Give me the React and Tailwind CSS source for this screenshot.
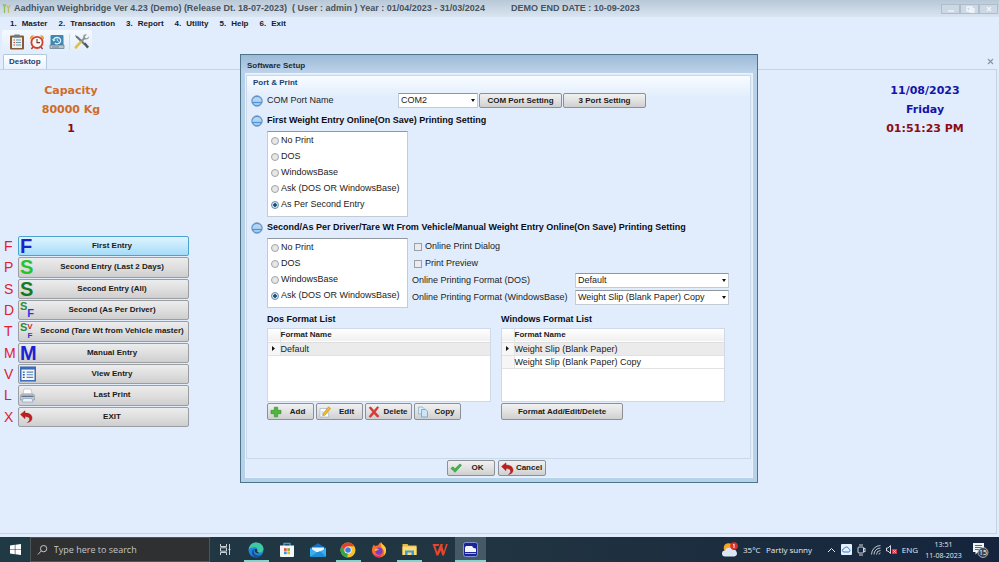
import React from "react";

const ui = "font-['Liberation_Sans',Arial,sans-serif]";
const btn =
  "rounded-[2px] border border-[#8d9197] bg-linear-to-b from-[#f1f1f1] via-[#e2e2e2] to-[#cfcfcf] text-[8px] font-bold leading-none text-[#1a1a1a] whitespace-nowrap";

/* ---------- toolbar icons ---------- */
const Clipboard = () => (
  <svg width="16" height="16" viewBox="0 0 16 16">
    <rect x="1" y="1.5" width="14" height="14" rx="1" fill="#8a5a35" />
    <rect x="3" y="3.5" width="10" height="10.5" fill="#e9f3f4" />
    <rect x="5" y="0.5" width="6" height="3" rx="1" fill="#6d7c82" />
    <path d="M4.5 6h1.5M4.5 8.5h1.5M4.5 11h1.5" stroke="#c4523c" strokeWidth="1.2" />
    <path d="M7 6h5M7 8.5h5M7 11h5" stroke="#6f93a0" strokeWidth="1.1" />
  </svg>
);
const Alarm = () => (
  <svg width="16" height="16" viewBox="0 0 16 16">
    <path d="M1 5a3 3 0 0 1 4-3.6L2 5.6zM15 5a3 3 0 0 0-4-3.6L14 5.6z" fill="#e9a03b" />
    <path d="M4 13l-1.6 2M12 13l1.6 2" stroke="#8b4a3c" strokeWidth="1.4" />
    <circle cx="8" cy="8.4" r="5.6" fill="#fbf6f2" stroke="#d2402f" strokeWidth="1.8" />
    <path d="M8 5v3.6h3" stroke="#55413d" strokeWidth="1.1" fill="none" />
  </svg>
);
const Backup = () => (
  <svg width="16" height="16" viewBox="0 0 16 16">
    <rect x="1.5" y="1" width="13" height="11" rx="1" fill="#3f88b4" />
    <path d="M1 11h14v3.5H1z" fill="#b9c7d1" stroke="#5d7485" strokeWidth=".7" />
    <path d="M3 13h7" stroke="#5d7485" strokeWidth=".8" />
    <path d="M4.5 6.2a3.6 3.2 0 1 1 1.2 2.8" stroke="#e6f4fb" strokeWidth="1.2" fill="none" />
    <path d="M3 5l1.500 2.400L6.600 6z" fill="#e6f4fb" />
    <path d="M8.200 4.600v2l1.600.8" stroke="#e6f4fb" strokeWidth=".9" fill="none" />
  </svg>
);
const Tools = () => (
  <svg width="17" height="16" viewBox="0 0 17 16">
    <path d="M2 1l1 2.500L11 11l1.500-1.400L5 2.600z" fill="#6b7376" />
    <path d="M10.600 10.200l1.800-1.600 3.600 4.200-1.800 1.800z" fill="#50585c" />
    <path d="M15.800 2.400l-2 2-1.600-.6-.4-1.400 2-2c-2.400-.6-4.200 1.400-3.600 3.600L7 7l1.600 1.600 3-3.200c2.600.6 4.800-.8 4.200-3z" fill="#8c9599" />
    <path d="M7.200 6.800L9 8.600 3.600 14.400c-1.400 1-2.800-.4-1.800-1.800z" fill="#e3c13a" />
  </svg>
);

/* ---------- action icons ---------- */
const Undo = () => (
  <svg width="13" height="13" viewBox="0 0 13 13" className="shrink-0">
    <path d="M.5 4.500L5 .8v2.300c4.600 0 7.300 2 7 5.400-.2 2.200-2 3.600-4.600 4 1.600-1 2.200-2 2.200-3.300 0-1.700-1.600-2.600-4.600-2.600v2.200z" fill="#c01f1f" stroke="#8b1212" strokeWidth=".4" />
  </svg>
);
const Check = () => (
  <svg width="12" height="12" viewBox="0 0 12 12" className="shrink-0">
    <path d="M.8 6.500L3 4.800l2 2L9.800 2l1.700 1.200L5.200 10.300z" fill="#3fb54a" stroke="#258a32" strokeWidth=".5" />
  </svg>
);
const Plus = () => (
  <svg width="12" height="12" viewBox="0 0 12 12" className="shrink-0">
    <path d="M4.300 1.200h3.400v3.100h3.300v3.400H7.700v3.100H4.300V7.700H1V4.300h3.300z" fill="#4cb83c" stroke="#2f8a2a" strokeWidth=".6" />
  </svg>
);
const Edit = () => (
  <svg width="12" height="12" viewBox="0 0 12 12" className="shrink-0">
    <path d="M1 2.500h7l2 8.500H1z" fill="#fff" stroke="#9fb0c4" strokeWidth=".7" />
    <path d="M2.500 8h4M2.500 6h2" stroke="#8aa6c8" strokeWidth=".7" />
    <path d="M9.600.8l1.900 1.700L6.200 9l-2.500.9.6-2.600z" fill="#f0bd2e" stroke="#a97f1a" strokeWidth=".5" />
  </svg>
);
const Cross = () => (
  <svg width="12" height="12" viewBox="0 0 12 12" className="shrink-0">
    <path d="M1 1.800L2.800.8 6 4.400 9.400.6l1.400.8L7.400 5.900l3.800 4.300-1.800 1.100L6 7.700 2.600 11.400 1 10.400l3.600-4.500z" fill="#e23a33" stroke="#b42220" strokeWidth=".4" />
  </svg>
);
const Copy = () => (
  <svg width="12" height="12" viewBox="0 0 12 12" className="shrink-0">
    <path d="M1.500 1h4l1.500 1.500V8H1.500z" fill="#dcedf9" stroke="#7fabc9" strokeWidth=".7" />
    <path d="M4.500 3.500h4.200l1.800 1.800V11h-6z" fill="#cde5f6" stroke="#5f96bd" strokeWidth=".7" />
  </svg>
);
const Sphere = () => (
  <svg width="12" height="12" viewBox="0 0 12 12" className="shrink-0">
    <circle cx="6" cy="6" r="5.300" fill="#4f93d6" stroke="#7593b5" strokeWidth=".8" />
    <path d="M1.600 5.200a4.500 4.200 0 0 1 8.800 0z" fill="#b4d5f5" />
    <path d="M1.500 5.400h9v1.200h-9z" fill="#e4f2fd" />
    <path d="M2.200 8a4 3.400 0 0 0 7.600 0z" fill="#9ccdf5" />
  </svg>
);
const ListIcon = () => (
  <svg width="17" height="16" viewBox="0 0 17 16">
    <rect x=".8" y=".8" width="15.400" height="14.400" fill="#f4f8fd" stroke="#3a6cb8" strokeWidth="1.600" />
    <path d="M1 2.300h15" stroke="#3a6cb8" strokeWidth="2" />
    <path d="M3 6h2M3 8.800h2M3 11.600h2" stroke="#2c5596" strokeWidth="1.500" />
    <path d="M7 6h7M7 8.800h7M7 11.600h7" stroke="#5f82ba" strokeWidth="1.200" />
  </svg>
);
const Printer = () => (
  <svg width="15" height="15" viewBox="0 0 15 15">
    <path d="M4 1h7l1 5H3z" fill="#fff" stroke="#b4bcc6" strokeWidth=".7" />
    <path d="M1.500 6h12l1 2v4h-14V8z" fill="#c4cbd4" stroke="#8e98a5" strokeWidth=".7" />
    <path d="M1.500 8.300h12" stroke="#5c6674" strokeWidth="1.200" />
    <path d="M3 10.500h9l.8 3.500H2.200z" fill="#e8f1fb" stroke="#8aa5c5" strokeWidth=".7" />
  </svg>
);

const g = "font-bold leading-[18px]";
const sideItems = [
  ["F", "First Entry", <span className={`${g} text-[20px] text-[#1c22cf]`}>F</span>],
  ["P", "Second Entry (Last 2 Days)", <span className={`${g} text-[20px] text-[#27c32f]`}>S</span>],
  ["S", "Second Entry (All)", <span className={`${g} text-[20px] text-[#157a25]`}>S</span>],
  ["D", "Second (As Per Driver)", (
    <span className="flex text-[11px] leading-[11px] font-bold">
      <span className="text-[#2a8b3c]">S</span>
      <span className="pt-[7px] text-[#2b35d8]">F</span>
    </span>
  )],
  ["T", "Second (Tare Wt from Vehicle master)", (
    <span className="flex text-[11px] leading-[11px] font-bold">
      <span className="text-[#2a8b3c]">S</span>
      <span className="flex flex-col text-[8px] leading-[9px]">
        <span className="text-[#d22a2a]">V</span>
        <span className="text-[#2b35d8]">F</span>
      </span>
    </span>
  )],
  ["M", "Manual Entry", <span className={`${g} text-[20px] text-[#1c22cf]`}>M</span>],
  ["V", "View Entry", <ListIcon />],
  ["L", "Last Print", <Printer />],
  ["X", "EXIT", <Undo />],
];

function SideMenu() {
  return (
    <nav className="mt-[98px] flex h-[191px] flex-col gap-px">
      {sideItems.map(([key, label, icon], i) => (
        <div key={key} className="flex min-h-0 flex-1 items-center">
          <span className="w-[18px] pl-[4px] text-[14px] leading-none text-[#e0202e]">{key}</span>
          <button
            type="button"
            className={
              "flex h-full w-[171px] items-center rounded-[2px] border text-[8px] font-bold whitespace-nowrap text-[#1a1a1a] " +
              (i === 0
                ? "border-[#4ba3cf] bg-linear-to-b from-[#def3fd] via-[#c3e9fc] to-[#a5dbf8]"
                : "border-[#9a9ea3] bg-linear-to-b from-[#ececec] via-[#dfdfdf] to-[#cecece]")
            }
          >
            <span className="flex w-[17px] shrink-0 justify-start pl-px">{icon}</span>
            <span className="flex-1 text-center">{label}</span>
          </button>
        </div>
      ))}
    </nav>
  );
}

function Radios({ name, options, value }) {
  return (
    <div role="radiogroup" aria-label={name} className="ml-[20px] w-[141px] shrink-0 border border-[#c3ccd6] border-t-[#8f979f] bg-white px-[3px] pt-px pb-[3px]">
      {options.map((o) => (
        <label key={o} className="flex h-4 items-center gap-[2px] text-[9px] whitespace-nowrap text-[#222]">
          <input
            type="radio"
            name={name}
            defaultChecked={o === value}
            className="size-[8px] shrink-0 appearance-none rounded-full border border-[#a0a4a8] bg-[#e6e6e6] checked:border-[#6c8ca8] checked:bg-[radial-gradient(circle,#1c4f78_35%,#cfe3f2_50%)]"
          />
          {o}
        </label>
      ))}
    </div>
  );
}

function Select({ id, options, className }) {
  return (
    <span className={"relative flex h-[15px] " + className}>
      <select id={id} className="w-full appearance-none border border-[#c3ccd6] border-t-[#8f979f] bg-white pl-[2px] text-[9px] leading-none text-[#222]">
        {options.map((o) => <option key={o}>{o}</option>)}
      </select>
      <svg className="pointer-events-none absolute top-[6px] right-[3px]" width="4" height="3" viewBox="0 0 4 3"><path d="M0 0h4L2 3z" fill="#111" /></svg>
    </span>
  );
}

function FormatTable({ title, rows }) {
  return (
    <div className="w-[224px]">
      <h3 className="h-[14px] text-[9px] leading-[14px] font-bold text-[#0c0c14]">{title}</h3>
      <div className="mt-[2px] h-[74px] border border-[#cfdae6] bg-white">
        <table aria-label={title} className="w-full border-collapse text-left text-[9px] leading-[12px] text-[#222]">
          <thead>
            <tr className="h-[13px] border-b border-[#dedede] bg-linear-to-b from-white to-[#f0f0f0] text-[8px]">
              <th className="w-[12px] border-r border-[#e4e4e4]" />
              <th className="font-bold">Format Name</th>
            </tr>
          </thead>
          <tbody>
            {rows.map((r, i) => (
              <tr key={r} className={"h-[13px] border-b border-[#e2e2e2] " + (i === 0 ? "bg-[#ebebeb]" : "")}>
                <td className="border-r border-[#e4e4e4] bg-[#f6f6f6]">
                  {i === 0 && <svg className="mx-auto" width="3" height="5" viewBox="0 0 3 5"><path d="M0 0l3 2.500L0 5z" fill="#111" /></svg>}
                </td>
                <td>{r}</td>
              </tr>
            ))}
          </tbody>
        </table>
      </div>
    </div>
  );
}

function IconButton({ icon, children, className = "" }) {
  return (
    <button type="button" className={`${btn} flex items-center pl-[2px] ${className}`}>
      {icon}
      <span className="flex-1 text-center">{children}</span>
    </button>
  );
}

function SectionTitle({ children, className }) {
  return (
    <h2 className={"flex h-[14px] items-center gap-[4px] text-[9px] font-bold whitespace-nowrap text-[#0c0c14] " + className}>
      <Sphere />
      {children}
    </h2>
  );
}

function Dialog() {
  return (
    <section role="dialog" aria-label="Software Setup" className="pointer-events-auto w-[518px] border border-[#4d7488] bg-[#b7d2e8] px-[4px] pb-[4px]">
      <header className="-mx-[4px] flex h-[18px] items-center bg-linear-to-b from-[#9dbad8] to-[#bdd3ea] pt-[4px] pl-[6px] text-[8px] font-bold text-[#1d2b3a]">
        Software Setup
      </header>
      <div className="border border-[#e8f2fc] bg-[#e1edfc]">
        <div className="mt-px mr-px border border-[#c9d9ea] bg-linear-to-b from-[#f8fcff] to-[#e1edfc] to-[22px] pb-[38px]">
          <div className="h-[15px] pl-[6px] text-[8px] leading-[13px] font-bold text-[#1f3f70]">Port &amp; Print</div>
          <div className="px-[4px] pt-[2px]">
            <div className="flex h-[15px] items-center">
              <Sphere />
              <label htmlFor="com" className="w-[135px] pl-[4px] text-[9px] text-[#222]">COM Port Name</label>
              <Select id="com" options={["COM2"]} className="w-[80px]" />
              <button type="button" className={`${btn} ml-px h-[15px] w-[83px]`}>COM Port Setting</button>
              <button type="button" className={`${btn} ml-px h-[15px] w-[83px]`}>3 Port Setting</button>
            </div>
            <SectionTitle className="mt-[6px]">First Weight Entry Online(On Save) Printing Setting</SectionTitle>
            <div className="mt-[3px] -ml-[4px] flex">
              <Radios name="First weight printing" value="As Per Second Entry" options={["No Print", "DOS", "WindowsBase", "Ask (DOS OR WindowsBase)", "As Per Second Entry"]} />
            </div>
            <SectionTitle className="mt-[4px]">Second/As Per Driver/Tare Wt From Vehicle/Manual Weight Entry Online(On Save) Printing Setting</SectionTitle>
            <div className="mt-[3px] -ml-[4px] flex gap-[4px]">
              <Radios name="Second weight printing" value="Ask (DOS OR WindowsBase)" options={["No Print", "DOS", "WindowsBase", "Ask (DOS OR WindowsBase)"]} />
              <div className="flex flex-col text-[9px] whitespace-nowrap text-[#222]">
                {["Online Print Dialog", "Print Preview"].map((t) => (
                  <label key={t} className="flex h-[17px] items-center gap-[3px] pl-[2px]">
                    <input type="checkbox" className="size-[8px] appearance-none border border-[#9aa0a6] bg-[#e9ebee]" />
                    {t}
                  </label>
                ))}
                <div className="flex h-[17px] items-center">
                  <label htmlFor="dosf" className="w-[163px]">Online Printing Format (DOS)</label>
                  <Select id="dosf" options={["Default"]} className="w-[154px]" />
                </div>
                <div className="flex h-[17px] items-center">
                  <label htmlFor="winf" className="w-[163px]">Online Printing Format (WindowsBase)</label>
                  <Select id="winf" options={["Weight Slip (Blank Paper) Copy"]} className="w-[154px]" />
                </div>
              </div>
            </div>
            <div className="mt-[4px] flex gap-[10px] pl-[16px]">
              <div>
                <FormatTable title="Dos Format List" rows={["Default"]} />
                <div className="mt-px flex gap-[2px]">
                  <IconButton icon={<Plus />} className="h-[17px] w-[47px]">Add</IconButton>
                  <IconButton icon={<Edit />} className="h-[17px] w-[47px]">Edit</IconButton>
                  <IconButton icon={<Cross />} className="h-[17px] w-[47px]">Delete</IconButton>
                  <IconButton icon={<Copy />} className="h-[17px] w-[47px]">Copy</IconButton>
                </div>
              </div>
              <div>
                <FormatTable title="Windows Format List" rows={["Weight Slip (Blank Paper)", "Weight Slip (Blank Paper) Copy"]} />
                <button type="button" className={`${btn} mt-px block h-[17px] w-[122px]`}>Format Add/Edit/Delete</button>
              </div>
            </div>
          </div>
        </div>
        <footer className="flex justify-center gap-[3px] pt-px pr-[6px] pb-px">
          <IconButton icon={<Check />} className="h-[16px] w-[48px]">OK</IconButton>
          <IconButton icon={<Undo />} className="h-[16px] w-[48px]">Cancel</IconButton>
        </footer>
      </div>
    </section>
  );
}

/* ---------- taskbar ---------- */
const Edge = () => (
  <svg width="16" height="16" viewBox="0 0 16 16">
    <circle cx="8" cy="8" r="7.500" fill="#1f86d8" />
    <path d="M.6 8C1 3.500 4 .5 8 .5c4.500 0 7.500 3 7.500 6.300 0 2.400-1.700 3.900-3.900 3.900-1.600 0-2.500-.6-2.300-1.400.8-1.300.3-4-2.600-4C3.500 5.300 1.300 6.300.6 8z" fill="#3fc9a0" />
    <path d="M6.200 7c-1.400 2.500 0 6.500 4.500 6.500 1.500 0 2.700-.5 3.600-1.200C13 14.400 11 15.500 8.500 15.500 5 15.500 3.300 12 4 9.500 4.300 8.300 5.200 7.300 6.200 7z" fill="#12539f" />
    <path d="M6.800 7.300c1.600-.7 2.900.5 2.400 2-.4.900.6 1.500 2.400 1.400-2.500 1.500-5.600-.4-4.800-3.400z" fill="#1f3540" />
  </svg>
);
const Store = () => (
  <svg width="16" height="16" viewBox="0 0 16 16">
    <path d="M5 4V1.500h6V4" fill="none" stroke="#3fa0e0" strokeWidth="1.300" />
    <path d="M1 3.500h14v10.500a1 1 0 0 1-1 1H2a1 1 0 0 1-1-1z" fill="#f4f6f8" />
    <path d="M5 6.200h2.700v2.700H5z" fill="#e8502f" /><path d="M8.300 6.200H11v2.700H8.300z" fill="#7cb52c" />
    <path d="M5 9.500h2.700v2.700H5z" fill="#2f9be8" /><path d="M8.300 9.500H11v2.700H8.300z" fill="#f3b51d" />
  </svg>
);
const MailIcon = () => (
  <svg width="16" height="14" viewBox="0 0 16 14">
    <path d="M0 5l8-4.800L16 5v8.500H0z" fill="#1372c4" />
    <path d="M2 4.500h12V9H2z" fill="#e9f4fc" />
    <path d="M0 5l8 5 8-5v8.500H0z" fill="#35b1f0" />
    <path d="M0 13.500L10 8l6 5.500z" fill="#1f8fdd" />
  </svg>
);
const Chrome = () => (
  <svg width="16" height="16" viewBox="0 0 16 16">
    <circle cx="8" cy="8" r="7.500" fill="#f5c42c" />
    <path d="M1.500 4.200A7.500 7.500 0 0 1 14.500 4.300H8L5 9.500z" fill="#e0412f" />
    <path d="M1.500 4.200L5 10l3 1.500-1 4A7.500 7.500 0 0 1 1.500 4.200z" fill="#34a34f" />
    <circle cx="8" cy="8" r="3.600" fill="#fff" /><circle cx="8" cy="8" r="2.800" fill="#3b7de8" />
  </svg>
);
const Firefox = () => (
  <svg width="16" height="16" viewBox="0 0 16 16">
    <path d="M1 8.500C.8 6 2 3.500 3 2.500l1 1.800C5 3.600 6 3.500 7 3.700 7.500 2 9 .6 10.200.3c0 2 3.500 2.700 4.600 6.200C16 11 13 15.500 8 15.500c-4 0-6.800-3-7-7z" fill="#fb6f2d" />
    <path d="M10.200.3c0 2 3.500 2.700 4.600 6.200.7 3-.3 5.500-2 7 1-3 .3-5-1-6.500C10 5 9.200 3 10.200.3z" fill="#fdc938" />
    <circle cx="8" cy="9.200" r="3.600" fill="#7c3bc9" />
    <path d="M3.600 7.500c1.400-1.500 3.500-1 4.600 0-1.600 0-1.800 1-3 1.500-1.400.4-1.600-.6-1.600-1.500z" fill="#fdae35" />
    <path d="M1.200 10c1.300 3 6 5 10 2.600-1 2-3 2.900-4.700 2.700C4 15 1.800 12.800 1.200 10z" fill="#e52b62" />
  </svg>
);
const Explorer = () => (
  <svg width="15" height="13" viewBox="0 0 15 13">
    <path d="M.5 1h5l1 1.500h8V12H.5z" fill="#e9b93c" />
    <path d="M.5 3.500h14V12H.5z" fill="#fbdc79" />
    <path d="M3 12V7.500h9V12h-2.500V9.500h-4V12z" fill="#3f9ad8" />
  </svg>
);
const Wps = () => (
  <svg width="16" height="13" viewBox="0 0 16 13">
    <path d="M.5 1h7l-1 2H3.300l2 6L8.500 1h2.600l-.8 2 1.600 5.500L14 1h1.800L12 12.500h-1.800L8.800 7.500l-2.500 5H4.500z" fill="#e2472c" />
  </svg>
);
const TruckApp = () => (
  <svg width="15" height="15" viewBox="0 0 15 15">
    <rect x=".5" y=".5" width="14" height="14" rx="2" fill="#1a2399" stroke="#98a4e6" strokeWidth=".8" />
    <path d="M2 5.500l1-1.500h6l1.500 2 2.500.5V10H2z" fill="#f3f5fb" /><path d="M2 11.500h11" stroke="#cdd4f5" strokeWidth=".8" />
  </svg>
);

const apps = [
  ["Edge", <Edge />, true], ["Store", <Store />, false], ["Mail", <MailIcon />, false], ["Chrome", <Chrome />, true],
  ["Firefox", <Firefox />, false], ["Explorer", <Explorer />, true], ["WPS", <Wps />, false], ["Weighbridge", <TruckApp />, true],
];

function Taskbar() {
  return (
    <footer className="flex h-[25px] shrink-0 items-center bg-linear-to-r from-[#1f3a45] via-[#213441] to-[#15243c] font-['Open_Sans','Noto_Sans',sans-serif] text-[#e6eaee]">
      <button type="button" aria-label="Start" className="flex w-[30px] justify-center">
        <svg width="11" height="11" viewBox="0 0 11 11"><path d="M0 1.500l4.800-.7v4.400H0zM5.400.7L11 0v5.200H5.400zM0 5.800h4.800v4.400L0 9.500zM5.400 5.800H11V11l-5.600-.8z" fill="#fff" /></svg>
      </button>
      <label className="flex h-full w-[180px] items-center gap-[6px] border border-[#4d5458] bg-[#2e3032] pl-[6px]">
        <svg width="12" height="12" viewBox="0 0 12 12" fill="none" stroke="#d5d5d5"><circle cx="7.300" cy="4.500" r="3.500" /><path d="M4.800 7L1 11" /></svg>
        <input type="text" aria-label="Search" placeholder="Type here to search" className="w-full bg-transparent text-[9px] text-white placeholder:text-[#c4c6c8]" />
      </label>
      <button type="button" aria-label="Task view" className="flex w-[31px] justify-center">
        <svg width="11" height="11" viewBox="0 0 11 11" fill="none" stroke="#dfe5e8"><path d="M.5 0v2.500h6V0M.5 11V8.500h6V11M.5 3.800h6v3.400h-6zM9.500 0v11M8.500 5.500h2" strokeWidth=".9" /></svg>
      </button>
      <div className="grid h-full w-[245px] grid-cols-8">
        {apps.map(([name, icon, open], i) => (
          <button key={name} type="button" aria-label={name} className={"flex flex-col items-center justify-center pt-[2px] " + (i === 7 ? "bg-[#465966]" : "")}>
            <span className="flex flex-1 items-center">{icon}</span>
            <span className={"h-[2px] " + (i === 7 ? "w-full " : "w-[25px] ") + (open ? "bg-[#7fd6cf]" : "bg-transparent")} />
          </button>
        ))}
      </div>
      <div className="ml-auto flex h-full items-center text-[8px] whitespace-nowrap">
        <svg width="18" height="16" viewBox="0 0 18 16">
          <circle cx="6.500" cy="6" r="4.800" fill="#f5a623" />
          <path d="M3 14.500a3 3 0 0 1 0-6 4 4 0 0 1 7.500-.5 3.300 3.300 0 0 1 2 6.500z" fill="#dbe7f4" />
          <circle cx="12" cy="4" r="3.800" fill="#d9342b" /><path d="M12 2v4M11.200 2.800L12 2" stroke="#fff" strokeWidth=".9" />
        </svg>
        <span className="w-[24px] pl-[3px]">35°C</span>
        <span className="w-[63px] pl-[2px]">Partly sunny</span>
        <span className="flex items-center gap-[5px]">
          <svg width="9" height="6" viewBox="0 0 9 6" fill="none" stroke="#e6eaee"><path d="M1 5l3.500-3.500L8 5" /></svg>
          <svg width="11" height="11" viewBox="0 0 11 11"><rect width="11" height="11" rx="1" fill="#e6f0fb" /><path d="M3 8a1.600 1.600 0 0 1 0-3.200 2.500 2.500 0 0 1 4.800 0A1.700 1.700 0 0 1 8 8z" fill="none" stroke="#3d7fd6" /></svg>
          <svg width="9" height="12" viewBox="0 0 9 12" fill="none" stroke="#e6eaee" strokeWidth=".9"><rect x="1" y="3" width="5.500" height="6" rx="1" /><path d="M6.500 5L8 4v4L6.500 7M2 1h4M2 11h4" /></svg>
          <svg width="10" height="10" viewBox="0 0 10 10" fill="none" stroke="#cfd6dc" strokeWidth=".9"><path d="M.5 9.500A9 9 0 0 1 9.500.5M3 9.500A6.500 6.500 0 0 1 9.500 3M5.500 9.500a4 4 0 0 1 4-4M8 9.500A1.500 1.500 0 0 1 9.500 8" /></svg>
          <svg width="11" height="11" viewBox="0 0 11 11"><path d="M.5 4H2l2.500-2.500v8L2 7H.5z" fill="none" stroke="#e6eaee" strokeWidth=".9" /><rect x="6" y="5" width="5" height="5" fill="#d8344a" /><path d="M7.200 6.200l2.600 2.600M9.800 6.200L7.200 8.800" stroke="#fff" strokeWidth=".7" /></svg>
        </span>
        <span className="w-[26px] text-center">ENG</span>
        <span className="w-[41px] text-center text-[7px] leading-[11px]">13:51<br />11-08-2023</span>
        <span className="w-[35px] pl-[8px]">
          <svg width="17" height="16" viewBox="0 0 17 16">
            <path d="M1 1h11v9H6l-2.500 2.500V10H1z" fill="#eef2f5" /><path d="M3 3.500h7M3 5.500h7M3 7.500h4" stroke="#33435a" strokeWidth=".8" />
            <circle cx="11" cy="10.500" r="5" fill="#3b4653" stroke="#cfd6dc" strokeWidth=".7" />
            <text x="11" y="13" textAnchor="middle" fontSize="7" fill="#fff">15</text>
          </svg>
        </span>
      </div>
    </footer>
  );
}

const menu = ["Master", "Transaction", "Report", "Utility", "Help", "Exit"];

export default function App() {
  return (
    <div className={`${ui} relative flex min-h-screen flex-col bg-[#e1edfc]`}>
      <header className="flex h-[17px] items-center bg-linear-to-b from-[#b9c8d6] to-[#d9e5f1] pl-[2px] text-[9px] font-bold whitespace-pre text-[#48525c]">
        <svg width="9" height="11" viewBox="0 0 9 11" className="mr-[3px]" fill="none" strokeWidth="1.300">
          <path d="M1 1l1.500 3v6M4 1L2.500 4" stroke="#8fbf5a" /><path d="M5 3l1.500 2v5M8 2L6.500 5" stroke="#c9b96a" />
        </svg>
        <span>Aadhiyan Weighbridge Ver 4.23 (Demo) (Release Dt. 18-07-2023)  ( User : admin ) Year : 01/04/2023 - 31/03/2024</span>
        <span className="ml-[26px]">DEMO END DATE : 10-09-2023</span>
        <span className="mr-px ml-auto flex">
          {["M5 7h6", "M5 3h5v4H5zM8 5h4v3H8z", "M6 3l4 4M10 3L6 7"].map((d, i) => (
            <button key={d} type="button" aria-label={["Minimize", "Restore", "Close"][i]} className="flex h-[10px] w-[19px] items-center justify-center border border-[#aebdcb] bg-[#ccd9e5]">
              <svg width="16" height="10" viewBox="0 0 16 10" fill="none" stroke="#f3f7fb" strokeWidth="1.300"><path d={d} /></svg>
            </button>
          ))}
        </span>
      </header>
      <nav className="flex h-[13px] items-center gap-[11px] pl-[10px] text-[8px] font-bold text-[#16202c]">
        {menu.map((m, i) => (
          <button key={m} type="button" className="flex gap-[5px]"><span>{i + 1}.</span><span>{m}</span></button>
        ))}
      </nav>
      <div className="flex h-[23px] items-center pl-[2px]">
        <div className="flex h-full items-center gap-[4px] rounded-[2px] bg-linear-to-b from-[#f4f9ff] to-[#e1edfc] pr-[2px] pl-[7px]">
          <button type="button" aria-label="Entries"><Clipboard /></button>
          <button type="button" aria-label="Reminder"><Alarm /></button>
          <button type="button" aria-label="Backup"><Backup /></button>
          <button type="button" aria-label="Settings" className="border-l border-[#d0deed] pl-[3px]"><Tools /></button>
        </div>
      </div>
      <div className="flex h-[16px] items-end justify-between pt-[2px] pr-[5px] pl-[3px]">
        <div className="z-10 flex h-[15px] items-center rounded-t-[2px] border border-b-0 border-[#b4c7dc] bg-linear-to-b from-white to-[#e8f1fd] px-[5px] text-[8px] font-bold text-[#1f3f70]">Desktop</div>
        <button type="button" aria-label="Close tab" className="flex h-[15px] items-center">
          <svg width="7" height="7" viewBox="0 0 7 7" stroke="#8b96a2" strokeWidth="1.200"><path d="M1 1l5 5M6 1L1 6" /></svg>
        </button>
      </div>
      <main className="mr-[2px] mb-[3px] flex flex-1 justify-between border border-l-0 border-[#c3d3e4] pt-[11px]">
        <div className="w-[190px]">
          <div className="w-[142px] text-center font-['DejaVu_Sans',Verdana,sans-serif] text-[11px] leading-[19px] font-bold text-[#d06c28]">
            <p>Capacity</p>
            <p>80000 Kg</p>
            <p className="text-[#8b0c14]">1</p>
          </div>
          <SideMenu />
        </div>
        <div className="w-[142px] text-center font-['DejaVu_Sans',Verdana,sans-serif] text-[11px] leading-[19px] font-bold text-[#1414a8]">
          <p>11/08/2023</p>
          <p>Friday</p>
          <p className="text-[#8b0c14]">01:51:23 PM</p>
        </div>
      </main>
      <Taskbar />
      <div className="pointer-events-none absolute inset-x-0 top-[54px] z-20 flex justify-center pr-px">
        <Dialog />
      </div>
    </div>
  );
}
